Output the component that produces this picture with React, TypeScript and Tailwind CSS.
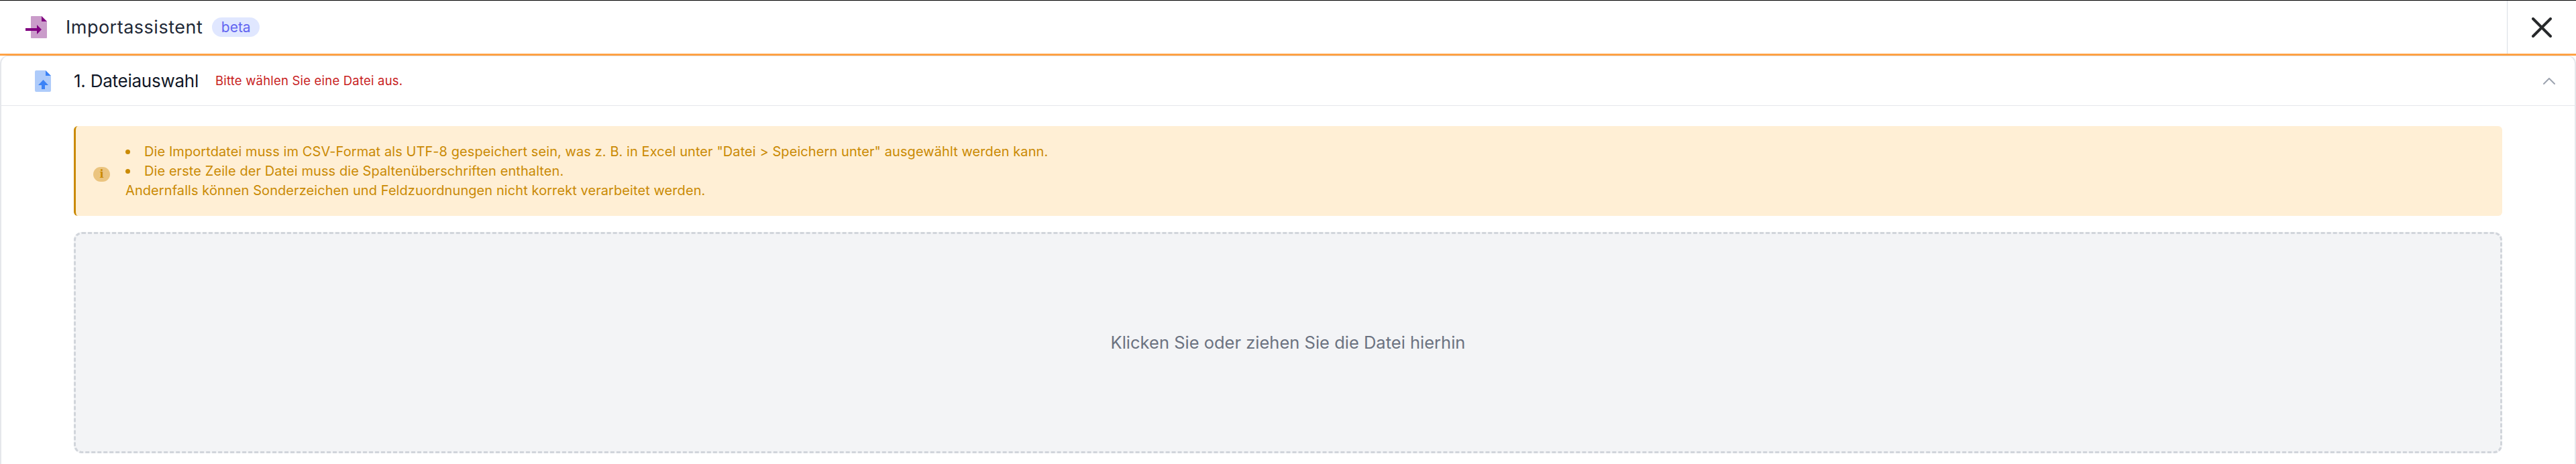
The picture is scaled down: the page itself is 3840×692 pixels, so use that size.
import { ChevronUp } from 'lucide-react'

const FileImportIcon = () => (
  <svg viewBox="0 0 32 33" className="h-[33px] w-[32px] shrink-0">
    <path d="M8 1a1 1 0 0 1 1-1h15v8h8v24a1 1 0 0 1-1 1H9a1 1 0 0 1-1-1z" fill="#ca9cca" />
    <path d="M24 0l8 8h-8z" fill="#800080" />
    <path d="M0 18h17v-5l7 7-7 7v-5H0z" fill="#800080" />
  </svg>
)

const FileUploadIcon = () => (
  <svg viewBox="0 0 24 32" className="h-[32px] w-[24px] shrink-0">
    <path d="M0 2a2 2 0 0 1 2-2h14v8h8v22a2 2 0 0 1-2 2H2a2 2 0 0 1-2-2z" fill="#aecbfa" />
    <path d="M16 0l8 8h-8z" fill="#3b82f6" />
    <path d="M12.5 14l7.5 8h-5v6h-5v-6H5z" fill="#3b82f6" />
  </svg>
)

const InfoIcon = () => (
  <div className="mt-[10px] flex h-[22px] w-[25px] shrink-0 items-center justify-center rounded-full bg-[#ebc47f] font-['DejaVu_Serif',serif] text-[16px] font-bold leading-none text-[#ca8a04]">
    i
  </div>
)

const Bullet = ({ children }: { children: React.ReactNode }) => (
  <li className="flex items-center gap-[21px]">
    <span className="h-[7px] w-[7px] shrink-0 rounded-full bg-[#ca8a04]" />
    {children}
  </li>
)

export default function App() {
  return (
    <div className="h-[692px] w-[3840px] overflow-hidden bg-white font-['Inter',sans-serif]">
      <header className="flex h-[83px] items-stretch border-t border-b-[3px] border-t-black border-b-[#ffa245]">
        <div className="flex flex-1 items-center pl-[38px]">
          <FileImportIcon />
          <h1 className="ml-[28px] text-[27px] leading-none tracking-[0.5px] text-[#1f2937]">Importassistent</h1>
          <span className="ml-[14px] flex h-[29px] w-[71px] items-center justify-center rounded-full bg-[#e0e7ff] text-[21px] text-[#6366f1]">
            beta
          </span>
        </div>
        <button type="button" className="flex w-[103px] items-center justify-center border-l border-[#d9dee5]">
          <svg viewBox="0 0 30 30" className="h-[30px] w-[30px]">
            <path d="M2 2l26 26M28 2L2 28" stroke="#27292b" strokeWidth="4" strokeLinecap="round" />
          </svg>
        </button>
      </header>

      <section className="h-[609px] rounded-t-[12px] border-x-2 border-t border-[#e5e7eb] shadow-sm">
        <div className="flex h-[74px] items-center border-b border-[#e5e7eb] pl-[50px] pr-[22px]">
          <FileUploadIcon />
          <h2 className="ml-[34px] text-[26px] leading-none tracking-[-0.25px] text-[#111827]">1. Dateiauswahl</h2>
          <span className="ml-[25px] text-[18.5px] leading-none tracking-[0.2px] text-[#c81e1e]">Bitte wählen Sie eine Datei aus.</span>
          <ChevronUp className="ml-auto h-[32px] w-[32px] text-[#9ca3af]" strokeWidth={1.5} />
        </div>

        <div className="flex flex-col gap-6 px-[108px] pt-[30px]">
          <div className="flex h-[134px] items-center rounded-[6px] border-l-[3px] border-[#ca8a04] bg-[#ffefd5] pl-[26px] text-[20px] leading-[29px] tracking-[0.08px] text-[#ca8a04]">
            <InfoIcon />
            <div className="ml-[23px]">
              <ul>
                <Bullet>Die Importdatei muss im CSV-Format als UTF-8 gespeichert sein, was z. B. in Excel unter "Datei &gt; Speichern unter" ausgewählt werden kann.</Bullet>
                <Bullet>Die erste Zeile der Datei muss die Spaltenüberschriften enthalten.</Bullet>
              </ul>
              <p>Andernfalls können Sonderzeichen und Feldzuordnungen nicht korrekt verarbeitet werden.</p>
            </div>
          </div>

          <div className="flex h-[330px] items-center justify-center rounded-[12px] border-[3px] border-dashed border-[#d1d5db] bg-[#f3f4f6] text-[25.5px] text-[#6b7280]">
            Klicken Sie oder ziehen Sie die Datei hierhin
          </div>
        </div>
      </section>
    </div>
  )
}
